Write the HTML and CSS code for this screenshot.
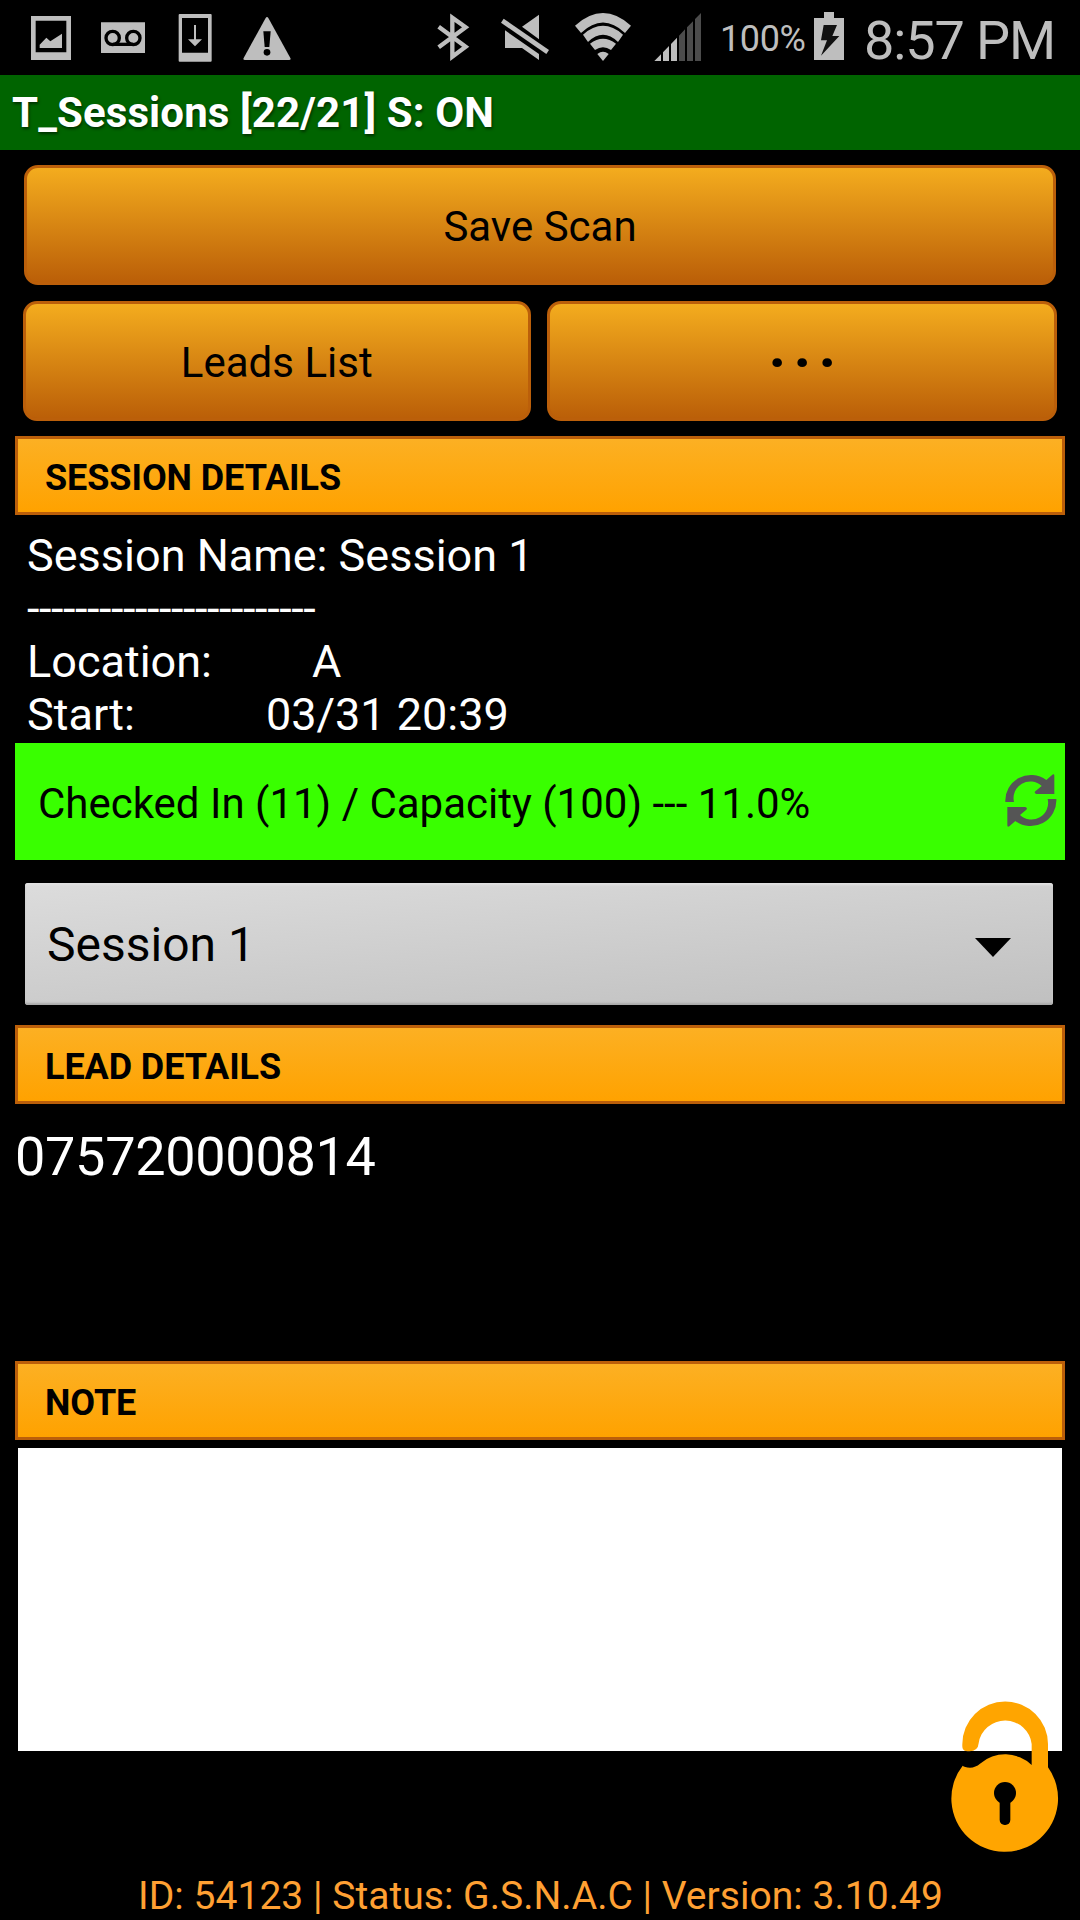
FILE: index.html
```
<!DOCTYPE html>
<html lang="en">
<head>
    <meta charset="UTF-8">
    <meta name="viewport" content="width=device-width, initial-scale=1.0">
    <title>T_Sessions</title>
    <link rel="stylesheet" href="styles.css">
</head>
<body>
    <div class="status-bar">
        <div class="status-left">
            <svg width="40" height="75" viewBox="93 0 120 225">
                <path fill-rule="evenodd" d="M93 48H213V180H93ZM107 62V157H199V62Z"/>
                <path d="M119 144V134L139 113L151 124L186 101V144Z"/>
            </svg>
            <svg class="icon-voicemail" width="44" height="75" viewBox="303 0 132 225">
                <path d="M303 67H435V159H303Z"/>
                <g fill="none" stroke="#000" stroke-width="10">
                    <circle cx="338" cy="114" r="20"/>
                    <circle cx="400" cy="114" r="20"/>
                    <path d="M338 133H400"/>
                </g>
            </svg>
            <svg class="icon-download" width="34" height="75" viewBox="534 0 102 225">
                <path fill-rule="evenodd" d="M539 42H632Q635 42 635 45V182Q635 185 632 185H539Q536 185 536 182V45Q536 42 539 42ZM546 54V158H624V54Z"/>
                <path d="M582 75H588V118H606L585 139L564 118H582Z"/>
            </svg>
            <svg class="icon-warning" width="48" height="75" viewBox="729 0 144 225">
                <path d="M797 54Q801 48 805 54L871 174Q874 180 867 180H735Q728 180 731 174Z"/>
                <path fill="#000" d="M790 94H812L808 141H794Z"/>
                <circle fill="#000" cx="801" cy="157" r="10"/>
            </svg>
        </div>
        <div class="status-right">
            <svg width="34" height="75" viewBox="108 0 102 225">
                <path fill="none" stroke="#bebebe" stroke-width="13" d="M113 80L194 140L154 170V53L194 82L113 142"/>
            </svg>
            <svg class="icon-mute" width="48" height="75" viewBox="300 0 144 225">
                <path d="M414 44V118L363 80ZM312 91L414 162V180L363 144H312Z"/>
                <path d="M308 56L444 150L436 162L300 68Z"/>
            </svg>
            <svg class="icon-wifi" width="58" height="75" viewBox="519 0 174 225">
                <path d="M522 77Q606 1 690 77L672 99Q606 36 540 99Z"/>
                <path d="M546 104Q606 51 666 104L651 126Q606 83 561 126Z"/>
                <path d="M567 131Q606 101 645 131L630 150Q606 133 582 150Z"/>
                <path d="M589 162Q606 149 623 162L606 183Z"/>
            </svg>
            <svg class="icon-signal" width="48" height="75" viewBox="759 0 144 225">
                <path d="M760 183L780 163V183ZM786 157L804 138V183H786ZM810 132L828 113V183H810Z"/>
                <path fill="#4c4c4c" d="M834 107L852 88V183H834ZM858 82L876 64V183H858ZM882 57L900 39V183H882Z"/>
            </svg>
            <span class="battery-text">100%</span>
            <svg width="30" height="75" viewBox="282 0 90 225">
                <path d="M312 36H342V54H372V180H282V54H312Z"/>
                <path fill="#111" d="M311 75H351L337 108H358L303 167L321 121H303Z"/>
            </svg>
            <span class="clock">8:57 PM</span>
        </div>
    </div>

    <div class="title-bar">T_Sessions [22/21] S: ON</div>

    <div class="buttons">
        <button class="btn btn-save">Save Scan</button>
        <div class="btn-row">
            <button class="btn">Leads List</button>
            <button class="btn btn-more">· · ·</button>
        </div>
    </div>

    <h2 class="section-header">SESSION DETAILS</h2>
    <div class="session-info">
        <p>Session Name: Session 1</p>
        <p class="dashes">------------------------</p>
        <p>Location:<span class="location">A</span></p>
        <p>Start:<span class="start">03/31 20:39</span></p>
    </div>

    <div class="capacity">
        <span class="capacity-text">Checked In (11) / Capacity (100) --- 11.0%</span>
        <svg width="52" height="53" viewBox="194 132 156 159">
            <path id="arrow" d="M195 216A77 77 0 0 1 318 150L336 134Q342 130 342 137V192H288Q280 189 285 184L304 168A50 50 0 0 0 221 216Z"/>
            <use href="#arrow" transform="rotate(180 271.5 211.5)"/>
        </svg>
    </div>

    <div class="spinner">
        <span>Session 1</span>
        <svg width="36" height="19" viewBox="0 0 36 19">
            <path d="M0 0H36L18 19Z"/>
        </svg>
    </div>

    <h2 class="section-header">LEAD DETAILS</h2>
    <div class="lead-id">075720000814</div>

    <h2 class="section-header">NOTE</h2>
    <div class="note">
        <svg class="lock" width="108" height="152" viewBox="93 63 324 456">
            <path d="M148 214C130 214 126 208 127 192A128 127 0 0 1 384 192V262A160 160 0 1 1 128 257Q133 262 150 263Q167 262 180 251A115 115 0 0 1 335 255V192A80 78 0 0 0 176 190Q174 214 148 214Z"/>
            <circle fill="#000" cx="255" cy="339" r="33"/>
            <rect fill="#000" x="239" y="345" width="32" height="90" rx="15"/>
        </svg>
    </div>

    <div class="footer">ID: 54123 | Status: G.S.N.A.C | Version: 3.10.49</div>
</body>
</html>
```
FILE: styles.css
```
* {
    box-sizing: border-box;
}

body {
    width: 1080px;
    height: 1920px;
    margin: 0;
    display: flex;
    flex-direction: column;
    overflow: hidden;
    background: #000;
    color: #fff;
    font-family: Roboto, sans-serif;
}

svg {
    display: block;
    flex-shrink: 0;
}

/* status bar */
.status-bar {
    height: 75px;
    display: flex;
    justify-content: space-between;
    padding: 0 13px 0 31px;
    color: #bebebe;
    fill: #bebebe;
}

.status-left,
.status-right {
    display: flex;
    white-space: nowrap;
}

.status-right {
    width: 631px;
    padding-left: 1px;
}

.icon-voicemail {
    margin-left: 30px;
}

.icon-download {
    margin-left: 33px;
}

.icon-warning {
    margin-left: 31px;
}

.icon-mute {
    margin-left: 30px;
}

.icon-wifi {
    margin-left: 25px;
}

.icon-signal {
    margin-left: 22px;
}

.battery-text {
    width: 94px;
    margin-left: 18px;
    flex-shrink: 0;
    font-size: 36px;
    line-height: 79px;
    letter-spacing: -0.4px;
}

.clock {
    margin-left: 20px;
    font-size: 54px;
    line-height: 81px;
    letter-spacing: -1.1px;
}

.title-bar {
    height: 75px;
    padding-left: 12px;
    background: #006400;
    font-size: 42px;
    font-weight: 700;
    line-height: 75px;
    letter-spacing: 0.12px;
    text-shadow: 1px 2px 3px rgba(0, 0, 0, 0.5);
}

/* buttons */
.buttons {
    padding: 15px 23px;
}

.btn {
    height: 120px;
    flex: 1;
    padding: 3px 0 0;
    border: 3px solid #bb5f0a;
    border-radius: 14px;
    background: linear-gradient(#f4ac1e, #bb5f08);
    color: #000;
    font-family: inherit;
    font-size: 42px;
}

.btn-save {
    display: block;
    width: 1032px;
    margin: 0 auto 16px;
}

.btn-row {
    display: flex;
    gap: 16px;
}

.btn-more {
    padding: 3px 3px 0 0;
    font-size: 60px;
    font-weight: 700;
    line-height: 110px;
    letter-spacing: -4px;
}

.section-header {
    height: 79px;
    margin: 0 15px;
    padding: 2px 0 0 27px;
    border: 3px solid #bb5f0a;
    background: linear-gradient(#fcb023, #ffa200);
    color: #000;
    font-size: 36px;
    font-weight: 700;
    line-height: 75px;
    letter-spacing: -0.08px;
}

.session-info {
    height: 228px;
    padding: 14px 27px 0;
    font-size: 45px;
    line-height: 53px;
}

.session-info p {
    margin: 0;
}

.dashes {
    letter-spacing: -0.43px;
}

.location {
    margin-left: 100px;
}

.start {
    margin-left: 131px;
}

.capacity {
    height: 117px;
    display: flex;
    align-items: center;
    justify-content: space-between;
    margin: 0 15px;
    padding: 0 8px 2px 23px;
    background: #39ff00;
    color: #000;
    fill: #555;
    font-size: 42px;
}

.capacity-text {
    padding-top: 6px;
}

.spinner {
    height: 122px;
    display: flex;
    align-items: center;
    justify-content: space-between;
    margin: 23px 27px 20px 25px;
    padding: 0 42px 0 22px;
    border-radius: 3px;
    background: linear-gradient(175deg, #dcdcdc, #c0c0c0);
    box-shadow: inset 0 2px 2px #e2e2e2, inset 0 -2px 2px #aaa;
    color: #000;
    font-size: 48px;
}

.spinner svg {
    margin-top: 6px;
}

.lead-id {
    height: 257px;
    padding: 21px 15px 0;
    font-size: 54px;
    line-height: 63px;
    letter-spacing: -0.3px;
}

.note {
    position: relative;
    height: 303px;
    margin: 8px 18px 0;
    background: #fff;
}

/* floats over the bottom right corner of the note */
.lock {
    position: absolute;
    right: 3px;
    bottom: -102px;
    fill: #ffa500;
}

.footer {
    margin-top: auto;
    padding: 0 0 1px 1px;
    color: #ffa033;
    font-size: 39px;
    line-height: 46px;
    letter-spacing: 0.03px;
    text-align: center;
}
```
